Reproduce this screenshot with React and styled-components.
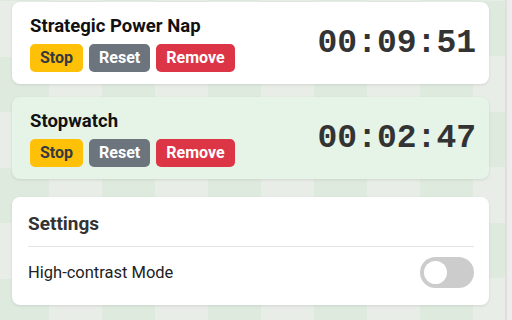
import React, { useState } from "react";
import styled, { createGlobalStyle } from "styled-components";

const GlobalStyle = createGlobalStyle`
    html, body {
        margin: 0;
        padding: 0;
    }
    body {
        font-family: Roboto, "Noto Sans", Arial, sans-serif;
        color: #222;
        background-color: #e8ede7;
    }
`;

const timers = [
    { id: 1, name: "Strategic Power Nap", time: "00:09:51", running: true },
    { id: 2, name: "Stopwatch", time: "00:02:47", running: true, active: true },
];

const Page = () => {
    const [contrast, setContrast] = useState(false);

    return (
        <Shell>
            <Main>
                {timers.map((t) => (
                    <TimerCard key={t.id} $active={t.active}>
                        <TimerInfo>
                            <TimerName>{t.name}</TimerName>
                            <Buttons>
                                <Button $kind="warning">{t.running ? "Stop" : "Start"}</Button>
                                <Button $kind="secondary">Reset</Button>
                                <Button $kind="danger">Remove</Button>
                            </Buttons>
                        </TimerInfo>
                        <Clock>{t.time}</Clock>
                    </TimerCard>
                ))}

                <SettingsCard>
                    <SettingsTitle>Settings</SettingsTitle>
                    <SettingRow>
                        <span>High-contrast Mode</span>
                        <Toggle
                            $on={contrast}
                            onClick={() => setContrast(!contrast)}
                            aria-label="High-contrast Mode"
                        />
                    </SettingRow>
                </SettingsCard>
            </Main>
            <ScrollTrack />
        </Shell>
    );
};

const App = () => (
    <>
        <GlobalStyle />
        <Page />
    </>
);

const Shell = styled.div`
    display: flex;
    height: 320px;
    overflow: hidden;
`;

const Main = styled.div`
    width: 505px;
    box-sizing: border-box;
    padding: 2px 16px 0 12px;
    display: flex;
    flex-direction: column;
    background: repeating-conic-gradient(#dfeadf 0 25%, #e8ede7 0 50%) -4px 1px / 106px 111px;
`;

const ScrollTrack = styled.div`
    flex: 1;
    background-color: #ededed;
    border-left: 2px solid #e3dddd;
`;

const Card = styled.div`
    border-radius: 8px;
    box-shadow: 0 1px 3px rgba(0, 0, 0, 0.1);
`;

const TimerCard = styled(Card)`
    display: flex;
    align-items: center;
    justify-content: space-between;
    height: 82px;
    box-sizing: border-box;
    padding: 0 13px 0 18px;
    margin-bottom: 13px;
    background-color: ${(p) => (p.$active ? "#e6f4e7" : "#ffffff")};
`;

const TimerInfo = styled.div`
    display: flex;
    flex-direction: column;
    gap: 7px;
`;

const TimerName = styled.div`
    font-size: 18.5px;
    font-weight: 700;
    line-height: 22px;
    color: #111;
`;

const Buttons = styled.div`
    display: flex;
    gap: 6px;
`;

const buttonColors = {
    warning: { bg: "#ffc107", fg: "#343a40" },
    secondary: { bg: "#6c757d", fg: "#ffffff" },
    danger: { bg: "#dc3545", fg: "#ffffff" },
};

const Button = styled.button`
    height: 28px;
    padding: 0 10px;
    border: none;
    border-radius: 5px;
    font-family: Roboto, sans-serif;
    font-size: 16px;
    font-weight: 700;
    background-color: ${(p) => buttonColors[p.$kind].bg};
    color: ${(p) => buttonColors[p.$kind].fg};
    cursor: pointer;
`;

const Clock = styled.div`
    font-family: "Liberation Mono", monospace;
    font-size: 33px;
    font-weight: 700;
    color: #333;
`;

const SettingsCard = styled(Card)`
    margin-top: 5px;
    background-color: #ffffff;
    padding: 16px 15px 17px 16px;
`;

const SettingsTitle = styled.div`
    font-size: 19px;
    line-height: 21px;
    font-weight: 700;
    color: #333;
    padding-bottom: 12px;
    border-bottom: 1px solid #e4e4e4;
    margin-bottom: 10px;
`;

const SettingRow = styled.div`
    display: flex;
    align-items: center;
    justify-content: space-between;
    font-size: 16.5px;
    color: #222;
`;

const Toggle = styled.button`
    position: relative;
    width: 54px;
    height: 31px;
    border: none;
    border-radius: 16px;
    padding: 0;
    background-color: ${(p) => (p.$on ? "#28a745" : "#cccccc")};
    cursor: pointer;

    &::after {
        content: "";
        position: absolute;
        top: 4px;
        left: ${(p) => (p.$on ? "27px" : "4px")};
        width: 23px;
        height: 23px;
        border-radius: 50%;
        background-color: #ffffff;
    }
`;

export default App;
